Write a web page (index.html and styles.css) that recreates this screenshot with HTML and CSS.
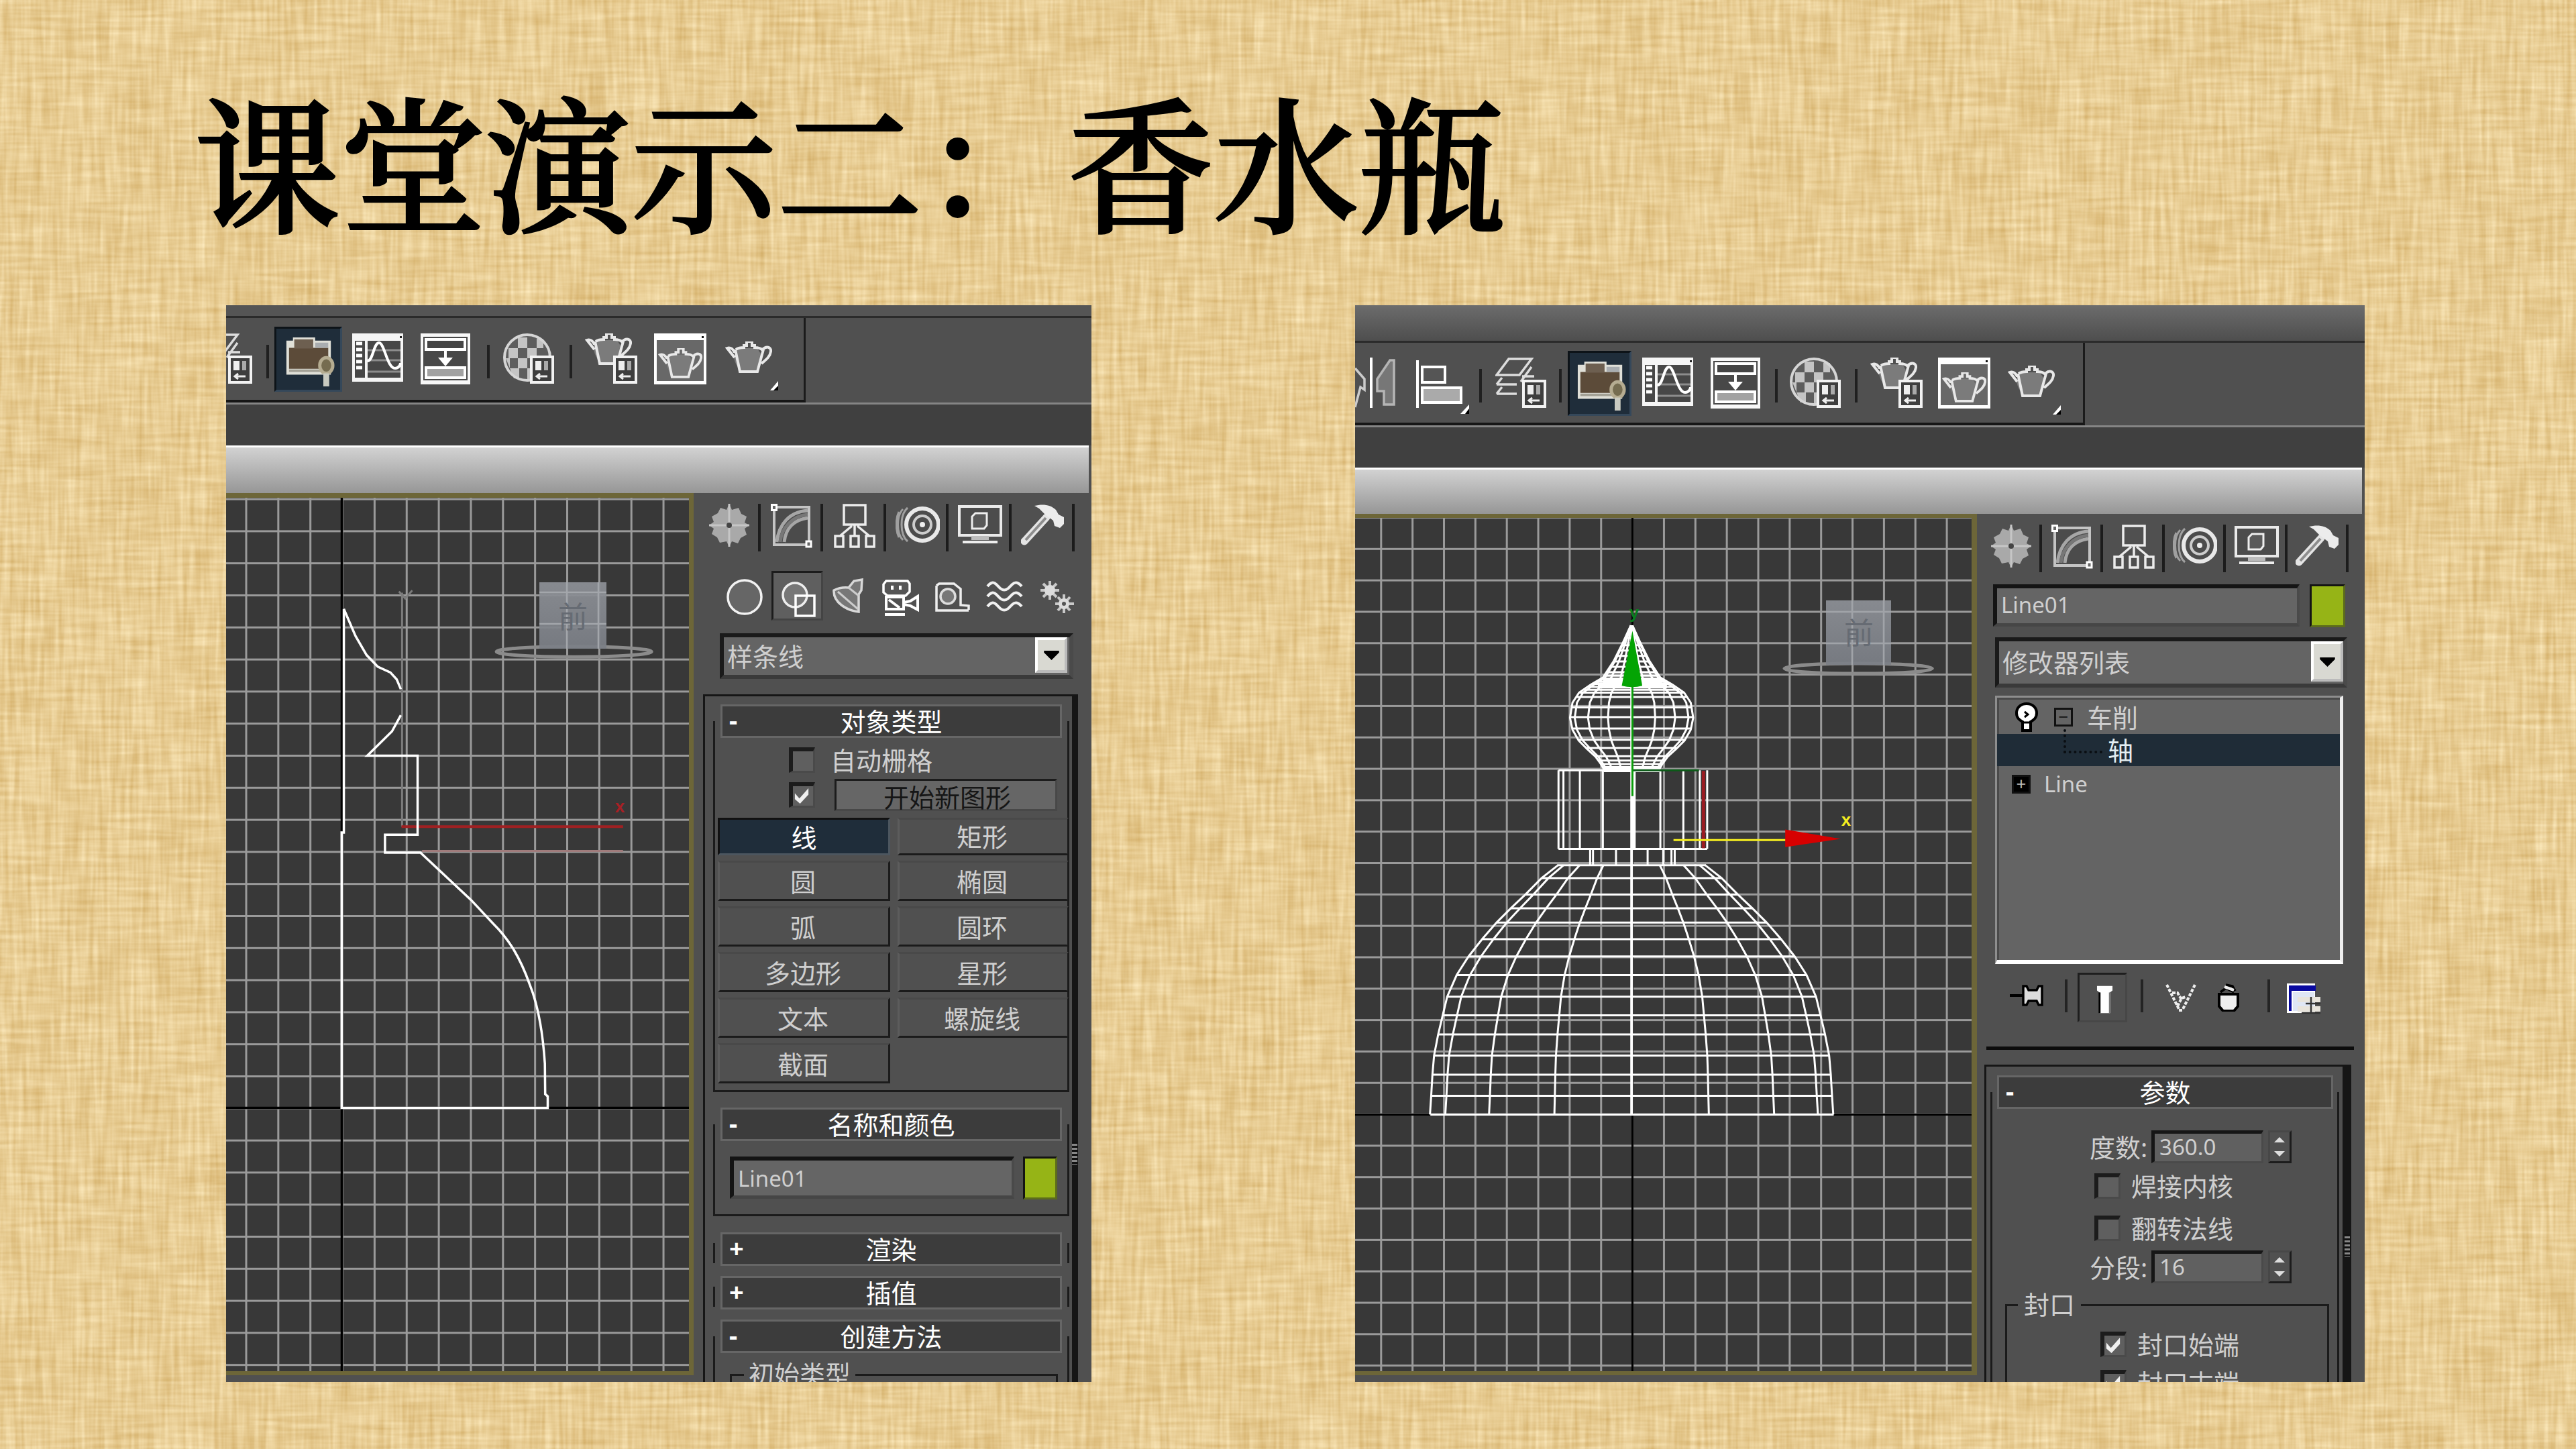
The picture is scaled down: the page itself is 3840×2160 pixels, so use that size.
FILE: index.html
```html
<!DOCTYPE html>
<html lang="zh-CN">
<head>
<meta charset="utf-8">
<title>课堂演示二：香水瓶</title>
<link rel="stylesheet" href="styles.css">
</head>
<body>
<svg width="0" height="0" class="defs" aria-hidden="true">
  <defs>
    <filter id="weave" x="0" y="0" width="100%" height="100%" color-interpolation-filters="sRGB">
      <feTurbulence type="fractalNoise" baseFrequency="0.012 0.15" numOctaves="2" seed="4"/>
      <feColorMatrix values="1 0 0 0 0  1 0 0 0 0  1 0 0 0 0  0 0 0 0 1" result="h"/>
      <feTurbulence type="fractalNoise" baseFrequency="0.15 0.010" numOctaves="2" seed="11"/>
      <feColorMatrix values="1 0 0 0 0  1 0 0 0 0  1 0 0 0 0  0 0 0 0 1" result="v"/>
      <feComposite in="h" in2="v" operator="arithmetic" k2=".45" k3=".55"/>
      <feColorMatrix values=".22 0 0 0 .798  .32 0 0 0 .64  .46 0 0 0 .345  0 0 0 0 1"/>
    </filter>
    <linearGradient id="cube" x1="0" y1="0" x2="0" y2="1"><stop offset="0" stop-color="#8d9096"/><stop offset="1" stop-color="#7b7f86"/></linearGradient>

    <symbol id="i-list" viewBox="0 0 36 42"><rect x="2" y="2" width="32" height="38" fill="#3e3e3e" stroke="#f2f2f2" stroke-width="4"/><path d="M8 8h9v14H8z" fill="#eee"/><path d="M21 8h6v14h-6z" fill="#aaa"/><path d="M12 31h14M15 27l-5 4 5 4" stroke="#eee" stroke-width="3" fill="none"/></symbol>
    <symbol id="i-layers" viewBox="0 0 76 75"><path d="M20 2h34L36 26H2zM12 40H2m0 0h30M2 54h30M54 14L38 36M10 30L2 40M10 44L2 54M58 28l-18 0" fill="none" stroke="#ddd" stroke-width="3.5"/><use href="#i-list" x="40" y="33" width="36" height="42"/></symbol>
    <symbol id="i-mirror" viewBox="0 0 60 75"><path d="M24 0v75" stroke="#fff" stroke-width="4"/><path d="M0 16l14 16v16L8 44 0 74" fill="none" stroke="#ccc" stroke-width="3.5"/><path d="M58 4v66H43V50l-10 0V32L52 4z" fill="#777" stroke="#b5b5b5" stroke-width="3.5"/></symbol>
    <symbol id="i-align" viewBox="0 0 80 82"><path d="M2 0v71" stroke="#fff" stroke-width="4"/><rect x="9" y="10" width="34" height="23" fill="#555" stroke="#fff" stroke-width="4"/><rect x="9" y="41" width="58" height="22" fill="#aaa" stroke="#fff" stroke-width="4"/><path d="M79 66v14H66z" fill="#fff"/><path d="M79 72v8h-6z" fill="#000"/></symbol>
    <symbol id="i-toolbox" viewBox="0 0 80 78"><path d="M3 7h10V2h34v5h24v52H3z" fill="#e0e0d8"/><path d="M7 18h60v32H7z" fill="#5c4b39"/><path d="M15 5h29v14H15z" fill="#6d5f50"/><path d="M47 10h20v8H47z" fill="#a9adb0"/><path d="M7 51h60v4H7z" fill="#a3a196"/><ellipse cx="64" cy="45" rx="10" ry="12" fill="#756c50" stroke="#b5ac91" stroke-width="5"/><path d="M64 57v20" stroke="#c9cac0" stroke-width="9"/></symbol>
    <symbol id="i-curve" viewBox="0 0 76 72"><path d="M0 0h76v72H0z" fill="#f5f5f5"/><path d="M4 11h15v55H4zM23 11h49v55H23z" fill="#474747"/><path d="M71 4h3v3h-3z" fill="#222"/><path d="M6 15h9M6 24h9M6 33h9M6 42h9M6 51h9" stroke="#fff" stroke-width="5"/><path d="M23 25h49M23 40h49M23 57h49" stroke="#8c8c8c" stroke-width="3"/><path d="M23 41c8 0 9-27 17-27s12 38 24 38c6 0 8-6 8-8" fill="none" stroke="#fff" stroke-width="4"/></symbol>
    <symbol id="i-schematic" viewBox="0 0 74 76"><path d="M0 0h74v76H0z" fill="#f8f8f8"/><path d="M4 5h66v65H4z" fill="#484848"/><path d="M8 9h58v15H8z" fill="#444" stroke="#fff" stroke-width="4"/><path d="M37 24v12" stroke="#fff" stroke-width="4"/><path d="M26 36h22L37 49z" fill="#fff"/><path d="M8 51h58v15H8z" fill="#a2a2a2" stroke="#fff" stroke-width="4"/></symbol>
    <symbol id="i-ball" viewBox="0 0 76 76"><circle cx="36" cy="36" r="34" fill="#5d5d5d"/><path d="M22 6h14v16H22zM8 22h14v15H8zM36 22h14v15H36zM50 8h10v14H50zM22 37h14v15H22zM4 37h6v15h14v15h-8zM36 52h10v16H36z" fill="#c4c4c4"/><circle cx="36" cy="36" r="34" fill="none" stroke="#d5d5d5" stroke-width="4"/><use href="#i-list" x="40" y="33" width="36" height="42"/></symbol>
    <symbol id="i-pot" viewBox="0 0 70 48"><path d="M20 10h28l7 12c0 10-7 16-9 23H22c-2-7-8-11-9-23z" fill="#7b7b7b"/><path d="M16 12c3-2 7-3 12-3V6h4V0h8v6h4v3c6 0 9 1 12 4M15 12L22 45h26l9-33M14 24L3 10c5-2 9 2 11 6M55 13c6-7 14-5 13 2-1 8-8 13-14 18" fill="none" stroke="#e8e8e8" stroke-width="4"/></symbol>
    <symbol id="i-setup" viewBox="0 0 78 76"><use href="#i-pot" x="0" y="0" width="70" height="48"/><use href="#i-list" x="42" y="33" width="36" height="42"/></symbol>
    <symbol id="i-frame" viewBox="0 0 78 76"><path d="M0 0h78v76H0z" fill="#fff"/><path d="M4 10h70v61H4z" fill="#686868"/><path d="M71 4h3v3h-3z" fill="#111"/><use href="#i-pot" x="6" y="22" width="66" height="46"/></symbol>
    <symbol id="i-teapot" viewBox="0 0 80 74"><use href="#i-pot" x="0" y="0" width="70" height="48"/><path d="M79 59v14H67z" fill="#fff"/><path d="M79 66v7h-7z" fill="#000"/></symbol>

    <symbol id="i-star" viewBox="0 0 60 64"><path d="M30 0l4 9 10-3 4 9 8 4-3 9 7 4-7 5 3 9-9 5-4 8-9-3-4 8-4-8-10 2-4-8-8-5 3-8-7-5 7-5-3-8 9-5 4-8 9 3z" fill="#a9a9a9"/><path d="M30 0v64M0 32h60" stroke="#c6c6c6" stroke-width="3"/><circle cx="30" cy="32" r="4" fill="#444"/></symbol>
    <symbol id="i-modify" viewBox="0 0 62 66"><path d="M5 5h52v56H5z" fill="#4b4b4b" stroke="#c4c4c4" stroke-width="4"/><path d="M9 57C12 30 28 12 55 10M20 57c2-20 14-33 35-36" stroke="#a6a6a6" stroke-width="5" fill="none"/><path d="M14 57C16 36 32 18 55 16" stroke="#777" stroke-width="5" fill="none"/><path d="M1.500 1.500h7v8h-7zM53 56h7v8h-7z" fill="#666" stroke="#fff" stroke-width="3"/></symbol>
    <symbol id="i-hier" viewBox="0 0 62 66"><path d="M15 2h32v29H15zM2 48h12v16H2zM25 48h12v16H25zM48 48h12v16H48zM31 31v17M27 33L9 48M35 33l18 15" fill="none" stroke="#ececec" stroke-width="3.500"/></symbol>
    <symbol id="i-motion" viewBox="0 0 66 58"><circle cx="40" cy="29" r="24" fill="#4c4c4c" stroke="#e8e8e8" stroke-width="6"/><circle cx="40" cy="29" r="13" fill="none" stroke="#ccc" stroke-width="4"/><circle cx="40" cy="29" r="4" fill="#eee"/><path d="M18 4C6 14 6 44 18 54M11 6C1 16 1 42 11 52M5 10c-5 10-5 28 0 38" fill="none" stroke="#a0a0a0" stroke-width="3"/></symbol>
    <symbol id="i-display" viewBox="0 0 66 58"><path d="M2 2h62v43H2z" fill="#4c4c4c" stroke="#eaeaea" stroke-width="4"/><path d="M20 46h26v6H20z" fill="#bbb"/><path d="M7 55h52" stroke="#eee" stroke-width="4"/><path d="M26 12h17v18l-4 5H21V17z" fill="#5a5a5a" stroke="#eee" stroke-width="3"/></symbol>
    <symbol id="i-hammer" viewBox="0 0 66 62"><path d="M5 56L38 20" stroke="#e4e4e4" stroke-width="11" stroke-linecap="round"/><path d="M7 54L37 21" stroke="#8d8d8d" stroke-width="4"/><path d="M20 3c12-3 24-2 32 6l4 7 8 4v10l-6 6-8-3-2-8-12-9-9-9z" fill="#ececec"/></symbol>

    <symbol id="i-sphere" viewBox="0 0 56 56"><circle cx="28" cy="28" r="25" fill="#666" stroke="#f2f2f2" stroke-width="3.500"/></symbol>
    <symbol id="i-shapes" viewBox="0 0 56 56"><circle cx="22" cy="22" r="18" fill="#777" stroke="#eee" stroke-width="3.500"/><path d="M23 23h28v30H23z" fill="none" stroke="#fff" stroke-width="3.500"/></symbol>
    <symbol id="i-light" viewBox="0 0 56 56"><path d="M6 18c8-4 14-5 22-4l8-10 12-2-1 16-4 6v26c-18-2-38-14-37-32z" fill="#777" stroke="#d8d8d8" stroke-width="3.500"/><path d="M12 20l30 26M28 14l15 12" stroke="#ccc" stroke-width="3"/></symbol>
    <symbol id="i-camera" viewBox="0 0 56 56"><path d="M6 4h32l3 4v12l-6 6H8l-6-5V9z" fill="#555" stroke="#fff" stroke-width="3.500"/><path d="M13 11h4v6h-4zM25 11h4v6h-4z" fill="#fff"/><path d="M6 28h26v18H6zM32 36l10-2 11-7v20l-11-6-10-2M4 54h30M10 32l16 12" fill="none" stroke="#fff" stroke-width="4"/></symbol>
    <symbol id="i-tape" viewBox="0 0 56 56"><path d="M4 11l4-3h22l10 8v24l12 1v6M4 11v37h48" fill="none" stroke="#eee" stroke-width="3.500"/><circle cx="21" cy="27" r="11" fill="#777" stroke="#ddd" stroke-width="3.500"/></symbol>
    <symbol id="i-waves" viewBox="0 0 56 56"><path d="M2 12q7-9 13-3l6 6q6 5 12 0l6-6q7-6 14 3M2 27q7-9 13-3l6 6q6 5 12 0l6-6q7-6 14 3M2 42q7-9 13-3l6 6q6 5 12 0l6-6q7-6 14 3" fill="none" stroke="#f0f0f0" stroke-width="4"/></symbol>
    <symbol id="i-gears" viewBox="0 0 56 56"><path d="M18 4v28M4 18h28M8 8l20 20M28 8L8 28M39 24v28M26 38h28M30 28l18 20M48 28L30 48" stroke="#c9c9c9" stroke-width="4"/><circle cx="18" cy="18" r="8" fill="#ddd"/><circle cx="39" cy="38" r="8" fill="#ddd"/><circle cx="39" cy="38" r="3" fill="#555"/></symbol>
    <symbol id="i-tick" viewBox="0 0 28 28"><path d="M3 11l7 8L24 3v10L11 27 3 20z" fill="#f0f0f0"/></symbol>
    <symbol id="i-down" viewBox="0 0 24 16"><path d="M0 1h24v3L12 16 0 4z" fill="#000"/></symbol>

    <symbol id="i-bulb" viewBox="0 0 34 44"><path d="M17 2C8 2 2 8 2 16c0 7 4 10 9 13v13h12V29c5-3 9-6 9-13C32 8 26 2 17 2z" fill="#fff" stroke="#000" stroke-width="4"/><path d="M14 14l5 4-5 4M13 30h9" stroke="#000" stroke-width="3" fill="none"/></symbol>
    <symbol id="i-pin" viewBox="0 0 50 36"><path d="M0 16h20" stroke="#000" stroke-width="4"/><path d="M20 2h5l3 6h12l3-6h5v28h-5l-3-6H28l-3 6h-5z" fill="#ddd" stroke="#000" stroke-width="3.500"/></symbol>
    <symbol id="i-tube" viewBox="0 0 26 42"><path d="M1 0h24v7l-4 3v32H5V10L1 7z" fill="#fff"/><path d="M5 10v32" stroke="#000" stroke-width="3"/><path d="M21 10v32" stroke="#777" stroke-width="3"/></symbol>
    <symbol id="i-unique" viewBox="0 0 46 42"><path d="M2 2l18 36M44 2L26 38M10 14h8l6 10M18 34l6-12 6-2M20 40h6" stroke="#eee" stroke-width="4" stroke-dasharray="5 2" fill="none"/></symbol>
    <symbol id="i-trash" viewBox="0 0 32 42"><path d="M2 16h28v18l-6 7H8l-6-7z" fill="#eee" stroke="#000" stroke-width="4"/><path d="M4 13l8-6 12 6M12 2l10 2 4 7" stroke="#000" stroke-width="3.500" fill="none"/><path d="M10 5l14 5" stroke="#eee" stroke-width="4"/></symbol>
    <symbol id="i-config" viewBox="0 0 52 46"><path d="M0 0h42v44H0z" fill="#fff"/><path d="M3 3h40v8H3zM3 3h4v38H3z" fill="#0a0aa0"/><path d="M9 13h32v28H9z" fill="#dfe6f5"/><path d="M16 20h34v8H16zM16 34h34v8H16z" fill="#e8e4dc"/><path d="M28 30h22M22 44h28M36 20v24" stroke="#333" stroke-width="2.500"/></symbol>
  </defs>
</svg>

<main class="slide">
  <svg class="fabric" aria-hidden="true"><rect width="3840" height="2160" filter="url(#weave)"/></svg>
  <h1 class="title">课堂演示二：香水瓶</h1>

  <div class="shots">
    <section class="shot shot-spline">
      <div class="caption"></div>
      <div class="toolbar">
        <svg class="layers-cut" viewBox="37 0 39 75"><use href="#i-layers" width="76" height="75"/></svg>
        <i class="sep"></i>
        <span class="pressed"><svg><use href="#i-toolbox"/></svg></span>
        <svg class="w76 h72"><use href="#i-curve"/></svg>
        <svg class="w74 h76"><use href="#i-schematic"/></svg>
        <i class="sep"></i>
        <svg class="w76 h76"><use href="#i-ball"/></svg>
        <i class="sep"></i>
        <svg class="w78 h76"><use href="#i-setup"/></svg>
        <svg class="w78 h76"><use href="#i-frame"/></svg>
        <svg class="w80 h74"><use href="#i-teapot"/></svg>
      </div>
      <div class="strip"></div>
      <div class="band"></div>
      <div class="work">
        <svg class="viewport" viewBox="337 735 697 1325">
          <defs><pattern id="gridA" x="365.500" y="742.600" width="47.850" height="47.800" patternUnits="userSpaceOnUse"><path d="M1.500 0v48M0 1.500h48" stroke="#9a9a9a" stroke-width="3"/></pattern></defs>
          <path d="M337 735h697v1325H337z" fill="#505050"/>
          <path d="M337 735h697v1315H337z" fill="#6d6638"/>
          <path d="M337 742h690v1302H337z" fill="#383838"/>
          <path d="M337 742h690v1302H337z" fill="url(#gridA)"/>
          <path d="M509.500 742v1302M337 1651.500h690" stroke="#000" stroke-width="3.500"/>
          <g transform="translate(320 720) scale(.47194 .86097)" fill="none" stroke-width="3" class="ink">
            <path d="M592 190V595M582 188l20 12 22-14" stroke="#7c7c7c"/>
            <path d="M655 637H1290" stroke="#a07c7c"/>
            <path d="M590 595H1290" stroke="#a02022" stroke-width="4"/>
            <path d="M408 218V605H401V1082H1052V1062L1044 1058 1043 1005C1035 940 1015 895 995 868C965 822 930 790 880 763L810 722 650 640H538V609H641V472H482L560 430 588 402M588 357L575 340 555 328 515 318 480 298 445 265 408 218" stroke="#fff" stroke-width="3.500"/>
            <ellipse cx="1135" cy="292" rx="245" ry="9" stroke="#8b8b8b" stroke-width="5"/>
          </g>
          <rect x="804" y="868" width="100" height="99" fill="url(#cube)" opacity=".93"/>
          <path d="M845 868v99M804 883h100M804 930h100M892 868v99" stroke="#a3a6ab" stroke-width="2.500"/>
          <text x="854" y="936" class="cube-label">前</text>
          <text x="924" y="1211" class="axis axis-red">x</text>
        </svg>

        <div class="command">
          <nav class="tabs">
            <span><svg class="t60"><use href="#i-star"/></svg></span><span><svg class="t62"><use href="#i-modify"/></svg></span><span><svg class="t62"><use href="#i-hier"/></svg></span><span><svg class="t66"><use href="#i-motion"/></svg></span><span><svg class="t66"><use href="#i-display"/></svg></span><span><svg class="t66"><use href="#i-hammer"/></svg></span>
          </nav>
          <nav class="kinds">
            <span><svg><use href="#i-sphere"/></svg></span><span class="on"><svg><use href="#i-shapes"/></svg></span><span><svg><use href="#i-light"/></svg></span><span><svg><use href="#i-camera"/></svg></span><span><svg><use href="#i-tape"/></svg></span><span><svg><use href="#i-waves"/></svg></span><span><svg><use href="#i-gears"/></svg></span>
          </nav>
          <div class="select"><span>样条线</span><b><svg><use href="#i-down"/></svg></b></div>
          <div class="rollups">
            <div class="rollup r-type">
              <header><em>-</em>对象类型</header>
              <div class="body">
                <label class="check"><i class="box"></i>自动栅格</label>
                <div class="check start"><i class="box"><svg><use href="#i-tick"/></svg></i><span class="startbtn">开始新图形</span></div>
                <div class="buttons">
                  <span class="active">线</span><span>矩形</span>
                  <span>圆</span><span>椭圆</span>
                  <span>弧</span><span>圆环</span>
                  <span>多边形</span><span>星形</span>
                  <span>文本</span><span>螺旋线</span>
                  <span>截面</span>
                </div>
              </div>
            </div>
            <div class="rollup r-name">
              <header><em>-</em>名称和颜色</header>
              <div class="body name-row"><span class="field">Line01</span><i class="swatch"></i></div>
            </div>
            <div class="rollup r-closed"><header><em class="plus">+</em>渲染</header></div>
            <div class="rollup r-closed"><header><em class="plus">+</em>插值</header></div>
            <div class="rollup r-create">
              <header><em>-</em>创建方法</header>
              <div class="body"><div class="group"><span>初始类型</span></div></div>
            </div>
            <i class="grip"></i>
          </div>
        </div>
      </div>
    </section>

    <section class="shot shot-lathe">
      <div class="caption"></div>
      <div class="toolbar">
        <svg class="w60 h75"><use href="#i-mirror"/></svg>
        <svg class="w80 h82"><use href="#i-align"/></svg>
        <i class="sep"></i>
        <svg class="w76 h75"><use href="#i-layers"/></svg>
        <i class="sep"></i>
        <span class="pressed"><svg><use href="#i-toolbox"/></svg></span>
        <svg class="w76 h72"><use href="#i-curve"/></svg>
        <svg class="w74 h76"><use href="#i-schematic"/></svg>
        <i class="sep"></i>
        <svg class="w76 h76"><use href="#i-ball"/></svg>
        <i class="sep"></i>
        <svg class="w78 h76"><use href="#i-setup"/></svg>
        <svg class="w78 h76"><use href="#i-frame"/></svg>
        <svg class="w80 h74"><use href="#i-teapot"/></svg>
      </div>
      <div class="strip"></div>
      <div class="band"></div>
      <div class="work">
        <svg class="viewport" viewBox="2020 766 927 1294">
          <defs>
            <pattern id="gridB" x="2057.300" y="770" width="46.850" height="46.820" patternUnits="userSpaceOnUse"><path d="M1.500 0v47M0 1.500h47" stroke="#9a9a9a" stroke-width="3"/></pattern>
            <path id="dome" vector-effect="non-scaling-stroke" d="M179 802L219 838 259 884 294 922 329 962 364 1008 397 1056 426 1108 449 1168 460 1220 471 1273 481 1332 485 1385 488 1444 491 1496"/>
            <path id="onion" vector-effect="non-scaling-stroke" d="M2 135L20 180 44 235 70 280 100 300 128 322 144 350 150 392 144 425 129 455 109 478 88 500 74 522 66 538"/>
            <g id="domeHalf"><use href="#dome"/><use href="#dome" transform="scale(.924 1)"/><use href="#dome" transform="scale(.707 1)"/><use href="#dome" transform="scale(.383 1)"/></g>
            <g id="onionHalf"><use href="#onion"/><use href="#onion" transform="scale(.924 1)"/><use href="#onion" transform="scale(.707 1)"/><use href="#onion" transform="scale(.383 1)"/></g>
          </defs>
          <path d="M2020 766h927v1294H2020z" fill="#505050"/>
          <path d="M2020 766h927v1284H2020z" fill="#6d6638"/>
          <path d="M2020 772h919v1272H2020z" fill="#383838"/>
          <path d="M2020 772h919v1272H2020z" fill="url(#gridB)"/>
          <path d="M2433.500 772v1272M2020 1661.500h919" stroke="#000" stroke-width="3"/>
          <g transform="translate(2000 860) scale(.6122 .5357)" class="ink" fill="none" stroke="#fff" stroke-width="3">
            <g transform="translate(706 0)"><use href="#domeHalf"/><use href="#onionHalf"/></g>
            <g transform="translate(706 0) scale(-1 1)"><use href="#domeHalf"/><use href="#onionHalf"/></g>
            <path d="M525 802H887M487 838H925M447 884H965M412 922H1000M377 962H1035M342 1008H1070M309 1056H1103M280 1108H1132M257 1168H1155M246 1220H1166M235 1273H1177M225 1332H1187M221 1385H1191M218 1444H1194M216 1496H1198"/>
            <path d="M690 170H722M682 190H730M677 205H735M671 220H741M664 235H748M657 250H755M648 265H764M640 275H772M634 283H778M624 291H788M612 298H800M600 306H812M590 314H822M578 322H834M570 334H842M560 363H852M556 390H856M561 422H851M576 453H836M596 476H816M618 499H794M626 511H786M632 521H780M636 530H776"/>
            <path d="M624 302H792M636 290H780M638 535H774" stroke-width="9"/>
            <path d="M528 538H640M528 757H890M528 538V757M540 538V757M580 538V757M636 538V757M776 538V757M832 538V757M872 538V757M890 538V757M605 757V802M612 757V802M668 757V802M745 757V802M783 757V802M803 757V802M811 757V802"/>
            <path d="M711 538V757" stroke-width="6"/><path d="M706 135V1496" stroke-width="4"/>
            <path d="M881 540V755" stroke="#9b1c22" stroke-width="5"/>
            <path d="M708 538H870" stroke="#0b5a17"/><path d="M708 300V610" stroke="#0a9d0a"/>
            <path d="M708 150L732 303Q708 310 682 303Z" fill="#04a404" stroke="none"/>
            <path d="M808 732H1082" stroke="#f5ee20"/>
            <path d="M1080 703L1215 729 1080 752Z" fill="#d60000" stroke="none"/>
            <ellipse cx="1258" cy="255" rx="180" ry="14" stroke="#8b8b8b" stroke-width="5"/>
          </g>
          <rect x="2722" y="895" width="97" height="96" fill="url(#cube)" opacity=".93"/>
          <path d="M2761 895v96M2808 895v96M2722 912h97M2722 959h97" stroke="#a0a3a8" stroke-width="2.500"/>
          <text x="2771" y="960" class="cube-label">前</text>
          <text x="2436" y="922" class="axis axis-green">y</text>
          <text x="2752" y="1231" class="axis axis-yellow">x</text>
        </svg>

        <div class="command">
          <nav class="tabs">
            <span><svg class="t60"><use href="#i-star"/></svg></span><span><svg class="t62"><use href="#i-modify"/></svg></span><span><svg class="t62"><use href="#i-hier"/></svg></span><span><svg class="t66"><use href="#i-motion"/></svg></span><span><svg class="t66"><use href="#i-display"/></svg></span><span><svg class="t66"><use href="#i-hammer"/></svg></span>
          </nav>
          <div class="name-row"><span class="field">Line01</span><i class="swatch"></i></div>
          <div class="select"><span>修改器列表</span><b><svg><use href="#i-down"/></svg></b></div>
          <div class="stack">
            <div class="item"><svg class="bulb"><use href="#i-bulb"/></svg><i class="node">−</i><span>车削</span></div>
            <div class="item sub"><i class="branch"></i><span>轴</span></div>
            <div class="item base"><i class="node solid">+</i><span>Line</span></div>
          </div>
          <div class="stack-tools">
            <svg class="pin"><use href="#i-pin"/></svg><i class="sep"></i>
            <span class="tube"><svg><use href="#i-tube"/></svg></span><i class="sep"></i>
            <svg class="unique"><use href="#i-unique"/></svg><svg class="trash"><use href="#i-trash"/></svg><i class="sep"></i>
            <svg class="config"><use href="#i-config"/></svg>
          </div>
          <div class="rule"></div>
          <div class="rollups">
            <div class="rollup">
              <header><em>-</em>参数</header>
              <div class="body">
                <div class="spin"><span>度数:</span><span class="num">360.0</span><i class="arrows"></i></div>
                <label class="check"><i class="box"></i>焊接内核</label>
                <label class="check second"><i class="box"></i>翻转法线</label>
                <div class="spin seg"><span>分段:</span><span class="num">16</span><i class="arrows"></i></div>
                <div class="group"><span>封口</span>
                  <label class="check"><i class="box"><svg><use href="#i-tick"/></svg></i>封口始端</label>
                  <label class="check last"><i class="box"><svg><use href="#i-tick"/></svg></i>封口末端</label>
                </div>
              </div>
            </div>
            <i class="grip"></i>
          </div>
        </div>
      </div>
    </section>
  </div>
</main>
</body>
</html>
```

FILE: styles.css
```css
* { box-sizing: border-box; }
body { margin: 0; background: #e9cf94; }
svg { display: block; flex: none; }
i, em { font-style: normal; }
.defs { position: absolute; }

.slide {
  position: relative;
  width: 3840px;
  height: 2160px;
  overflow: hidden;
  font: 38px/48px "Noto Sans", "Noto Sans CJK SC", sans-serif;
  color: #cfcfcf;
}
.fabric { position: absolute; inset: 0; width: 3840px; height: 2160px; }
.title {
  position: relative;
  margin: 0;
  padding: 76px 0 0 290px;
  height: 455px;
  font: 500 217px/320px "STZhongsong", "Noto Serif CJK SC", "Noto Sans CJK SC", serif;
  color: #000;
  -webkit-text-stroke: 4px #000;
}
.shots { position: relative; display: flex; gap: 393px; padding-left: 337px; }
.shot { height: 1605px; overflow: hidden; background: #505050; display: flex; flex-direction: column; }
.shot-spline { width: 1290px; }
.shot-lathe { width: 1505px; }

/* Main toolbar and title strips */
.caption { flex: none; height: 19px; background: #555; border-bottom: 3px solid #2b2b2b; }
.shot-lathe .caption { height: 56px; background: linear-gradient(#6c6c6c, #4e4e4e); }
.toolbar {
  flex: none;
  display: grid;
  justify-items: start;
  align-items: start;
  height: 126px;
  padding-top: 23px;
  border-right: 3px solid #1b1b1b;
  border-bottom: 4px solid #161616;
}
.shot-spline .toolbar { width: 864px; grid-template-columns: 60px 12px 116px 102px 99px 24px 99px 23px 103px 106px 100px; }
.shot-lathe .toolbar { width: 1088px; height: 123px; padding-top: 22px; grid-template-columns: 91px 94px 24px 95px 13px 111px 102px 96px 22px 97px 23px 101px 104px 80px; }
.toolbar .sep { width: 4px; height: 50px; margin-top: 17px; background: #202020; }
.toolbar .w80.h74 { margin-top: 12px; }
.toolbar .h82 { margin-top: 4px; }
.w60 { width: 60px; } .w74 { width: 74px; } .w76 { width: 76px; } .w78 { width: 78px; } .w80 { width: 80px; }
.h72 { height: 72px; } .h74 { height: 74px; } .h75 { height: 75px; } .h76 { height: 76px; } .h82 { height: 82px; }
.layers-cut { width: 39px; height: 75px; }
.pressed {
  width: 101px; height: 97px; margin-top: -10px; padding: 11px 0 0 12px;
  background: #1f2d3a; border: 3px solid #0d1318; border-right-color: #35485a; border-bottom-color: #35485a;
}
.shot-lathe .pressed { width: 95px; padding-left: 9px; }
.pressed svg { width: 78px; height: 76px; }
.strip { flex: none; height: 64px; background: #404040; border-top: 3px solid #858585; }
.band { flex: none; height: 71px; margin-right: 4px; border-top: 3px solid #fff; background: linear-gradient(#d2d2d2, #969696); }
.shot-lathe .strip { height: 63px; }
.shot-lathe .band { height: 69px; }

/* Viewports */
.work { flex: 1; min-height: 0; display: flex; }
.shot-spline .viewport { width: 697px; height: 1325px; }
.shot-lathe .viewport { width: 927px; height: 1294px; }
.ink * { vector-effect: non-scaling-stroke; }
.cube-label { font-size: 44px; text-anchor: middle; fill: #666b73; }
.axis { font: 700 26px "Liberation Sans", sans-serif; text-anchor: middle; }
.axis-red { fill: #a82025; }
.axis-green { fill: #0a7d1e; }
.axis-yellow { fill: #f5ee20; }

/* Command panel */
.command { flex: 1; min-width: 0; }
.tabs { display: grid; grid-template-columns: repeat(6, 93.600px); margin: 16px 0 0 6px; height: 71px; }
.tabs span { display: flex; justify-content: center; padding-left: 4px; border-right: 4px solid #1c1c1c; }
.shot-lathe .tabs { grid-template-columns: repeat(6, 91.500px); margin-left: 5px; }
.t60 { width: 60px; height: 64px; }
.t62 { width: 62px; height: 66px; }
.t66 { width: 66px; height: 62px; }
.kinds { display: flex; margin: 29px 0 0 38px; height: 74px; }
.kinds span { width: 77.500px; padding: 11px 0 0 10px; }
.kinds svg { width: 56px; height: 56px; }
.kinds .on { border: 3px solid #1c1c1c; border-right-color: #444; border-bottom-color: #444; background: #5f5f5f; padding: 11px 0 0 10px; }
.select {
  display: flex; justify-content: space-between; align-items: center;
  width: 527px; height: 68px; margin: 19px 0 0 39px; padding: 0 3px 0 5px;
  background: #646464; border: 6px solid #1a1a1a; border-right: 6px solid #4a4a4a; border-bottom-color: #3a3a3a;
}
.select b { display: flex; align-items: center; justify-content: center; align-self: stretch; width: 48px; margin-bottom: 3px; background: #d9d9d2; border: 4px solid #fff; border-right-color: #bbb; border-bottom-color: #bbb; }
.select b svg { width: 23px; height: 15px; }

.rollups { position: relative; width: 559px; height: 1100px; margin: 23px 0 0 14px; padding: 12px 0 0 12px; border: 3px solid #161616; border-right-width: 9px; }
.rollup { width: 531px; }
.rollup header {
  position: relative; height: 50px; margin: 0 11px 0 11px; text-align: center; line-height: 45px;
  color: #fff; background: #3c3c3c; border: 3px solid #666;
}
.rollup header em { position: absolute; left: 10px; top: -2px; font-weight: 700; }
.body { margin-top: -25px; border: 3px solid #1b1b1b; border-top: 0; }
.r-type { height: 578px; margin-bottom: 23px; }
.r-type .body { height: 553px; padding-top: 39px; }
.check { display: flex; align-items: center; height: 38px; }
.r-type .check { gap: 23px; padding-left: 110px; }
.box { flex: none; width: 39px; height: 38px; background: #5f5f5f; border: 6px solid #1c1c1c; border-right: 3px solid #4a4a4a; border-bottom: 3px solid #4a4a4a; }
.box svg { width: 27px; height: 27px; }
.r-type .start { height: 48px; margin-top: 9px; gap: 29px; }
.startbtn { width: 332px; height: 48px; padding-left: 4px; text-align: center; line-height: 48px; color: #161616; background: #666; border: 3px solid #1c1c1c; border-right-color: #484848; border-bottom-color: #484848; }
.buttons { display: grid; grid-template-columns: 257px 255px; column-gap: 11px; row-gap: 8px; grid-template-rows: 56px; grid-auto-rows: 60px; margin: 10px 0 0 4px; }
.buttons span { text-align: center; line-height: 56px; padding-right: 3px; border: 3px solid #1b1b1b; border-top-color: #494949; border-left-color: #5c5c5c; }
.buttons span:nth-child(2) { line-height: 51px; }
.buttons span:nth-child(even) { border-right-color: transparent; }
.buttons .active { background: #1f2d3a; color: #fff; border-color: #111 #4c565f #4c565f #111; line-height: 52px; padding-right: 0; }
.r-name { height: 162px; margin-bottom: 24px; }
.r-name .body { height: 137px; padding: 48px 0 0 22px; }
.name-row { display: flex; gap: 13px; }
.field { width: 424px; height: 63px; padding-left: 6px; line-height: 53px; font-size: 33px; background: #656565; border: 6px solid #141414; border-right: 4px solid #4a4a4a; border-bottom: 5px solid #464646; }
.swatch { width: 51px; height: 64px; background: #96b416; border: 3px solid #141414; border-right-color: #5c6c1c; border-bottom-color: #5c6c1c; }
.r-closed { height: 50px; margin-bottom: 15px; background: linear-gradient(#1b1b1b, #1b1b1b) 0 16px / 3px 30px no-repeat, linear-gradient(#1b1b1b, #1b1b1b) 100% 16px / 3px 30px no-repeat; }
.r-create .body { height: 300px; padding: 56px 14px 0 22px; }
.group { border: 3px solid #1b1b1b; height: 200px; }
.group > span { display: table; position: relative; margin: -27px 0 0 18px; padding: 0 7px; line-height: 48px; background: #505050; }
.grip { position: absolute; right: -8px; top: 664px; width: 8px; height: 34px; background: repeating-linear-gradient(#111 0 3px, #888 3px 6px); }

/* Modify panel */
.shot-lathe .name-row { margin: 18px 0 0 24px; gap: 15px; }
.shot-lathe .field { width: 457px; line-height: 50px; }
.shot-lathe .swatch { width: 53px; }
.shot-lathe .select { width: 525px; height: 75px; margin: 15px 0 0 27px; padding-right: 0; }
.shot-lathe .select span { margin-top: -2px; }
.stack { width: 519px; height: 400px; margin: 12px 0 0 27px; background: #646464; border: 3px solid #8e8e8e; border-right: 5px solid #eee; border-bottom: 6px solid #fff; box-shadow: inset 3px 3px #4a4a4a; padding-top: 4px; }
.item { display: flex; align-items: center; height: 50px; padding-left: 27px; }
.bulb { width: 34px; height: 44px; }
.node { width: 28px; height: 28px; margin: 0 21px 0 24px; border: 3px solid #111; color: #111; font-size: 26px; line-height: 20px; text-align: center; }
.sub { height: 48px; padding-left: 99px; background: #1f2c37; color: #e3eef2; }
.branch { width: 58px; height: 36px; margin: -26px 8px 0 0; border: 4px dotted #0a0e12; border-top: 0; border-right: 0; }
.base { height: 54px; padding-left: 22px; font-size: 33px; }
.node.solid { margin: 0 20px 0 0; background: #000; color: #bbb; }
.stack-tools { display: flex; align-items: flex-start; margin: 13px 0 0 49px; height: 74px; }
.stack-tools > svg { margin-top: 16px; }
.stack-tools .sep { width: 4px; height: 49px; margin-top: 10px; background: #242424; }
.stack-tools .pin { width: 50px; height: 36px; margin-right: 32px; margin-top: 18px; }
.tube { width: 74px; height: 74px; margin: 0 20px 0 15px; padding: 16px 0 0 25px; border: 3px solid #1e1e1e; border-right-color: #474747; border-bottom-color: #474747; }
.tube svg { width: 25px; height: 42px; }
.stack-tools .unique { width: 46px; height: 42px; margin: 16px 32px 0 33px; }
.trash { width: 32px; height: 42px; margin-right: 42px; }
.config { width: 52px; height: 46px; margin-left: 25px; }
.rule { width: 548px; height: 5px; margin: 36px 0 0 14px; background: #0c0c0c; }
.shot-lathe .rollups { width: 547px; margin: 22px 0 0 11px; height: 600px; padding: 13px 0 0 6px; border-right-width: 13px; }
.shot-lathe .rollup { width: 520px; }
.shot-lathe .rollup header { margin: 0 9px 0 10px; line-height: 44px; }
.shot-lathe .body { height: 560px; padding-top: 57px; }
.spin { display: flex; align-items: center; height: 49px; padding-left: 145px; }
.spin > span:first-child { width: 92px; white-space: nowrap; }
.num { width: 167px; height: 49px; padding-left: 7px; line-height: 40px; font-size: 33px; background: #606060; border: 5px solid #161616; border-right: 3px solid #4a4a4a; border-bottom: 3px solid #4a4a4a; }
.arrows { position: relative; width: 35px; height: 49px; margin-left: 7px; border: 3px solid #1c1c1c; border-left-color: #474747; border-top-color: #474747; }
.arrows::before { content: ""; position: absolute; left: 6px; top: 7px; border: 8px solid transparent; border-top: 0; border-bottom: 8px solid #ddd; }
.arrows::after { content: ""; position: absolute; left: 6px; top: 28px; border: 8px solid transparent; border-bottom: 0; border-top: 8px solid #ddd; }
.shot-lathe .check { gap: 16px; padding-left: 152px; margin-top: 14px; height: 39px; }
.shot-lathe .check.second { margin-top: 24px; }
.seg { margin-top: 14px; }
.shot-lathe .group { width: 483px; margin: 31px 0 0 19px; }
.shot-lathe .group > span { margin-left: 16px; padding: 0 9px; }
.shot-lathe .group .check { padding-left: 139px; margin-top: 16px; }
.shot-lathe .group .check.last { margin-top: 18px; }
.shot-lathe .grip { right: -11px; top: 250px; }
```
